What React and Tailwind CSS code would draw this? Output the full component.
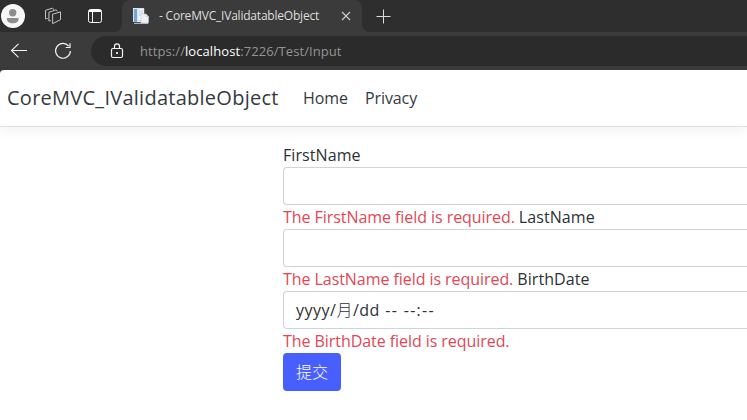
import React from "react";

function Profile() {
  return (
    <svg className="h-6 w-6 shrink-0" viewBox="0 0 24 24">
      <circle cx="12" cy="12" r="12" fill="#f7f7f7" />
      <circle cx="11.7" cy="12.8" r="0" />
      <circle cx="11.7" cy="8.8" r="3.7" fill="#8d8d8d" />
      <path d="M6 13.9h11.5v1.3c0 2.6-2.4 4.1-5.7 4.1S6 17.800 6 15.200z" fill="#8d8d8d" />
    </svg>
  );
}

function Workspaces() {
  return (
    <svg className="ml-[19px] h-[18px] w-[18px] shrink-0" viewBox="0 0 18 18" fill="none" stroke="#c4c4c4" strokeWidth="1" strokeLinejoin="round" strokeLinecap="round">
      <path d="M9 7.100 16.500 4.900V12.600L9 16.500Z" />
      <path d="M6.500 13.700 4.900 14V5.300L12 2.800 13.300 4" />
      <path d="M3.300 11.600 1.500 11.800V3.300L8.500 1.200 9.800 2.400" />
    </svg>
  );
}

function TabActions() {
  return (
    <svg className="ml-[25px] h-4 w-4 shrink-0" viewBox="0 0 16 16" fill="none" stroke="#fafafa" strokeWidth="1">
      <rect x="1.500" y="1.500" width="13" height="13" rx="2" />
      <path d="M2 2.500h12M2 3.500h12M5.500 4v10.500" />
    </svg>
  );
}

function PageIcon() {
  return (
    <svg className="ml-[11px] h-4 w-4 shrink-0" viewBox="0 0 16 16">
      <path d="M0 0h11v14H0z" fill="#e4edf4" />
      <path d="M1 1h3v13H1z" fill="#6fa8d8" />
      <path d="M0 1h1v13H0z" fill="#d7e6f2" />
      <path d="M5 .5h6v12H5z" fill="#f6f8fa" stroke="#c5ced8" strokeWidth=".5" />
      <path d="M6 3h4M6 5h4M6 7h4" stroke="#adc7dd" strokeWidth=".8" />
      <path d="M8 6h5l2.500 2.500V15H8z" fill="#edf1f5" stroke="#c0cbd7" strokeWidth=".6" />
      <path d="M13 6v2.500h2.500M1 15.300h14" fill="none" stroke="#c6d2de" strokeWidth="1" />
    </svg>
  );
}

function TabStrip() {
  return (
    <div className="flex h-8 bg-[#3b3b3b]">
      <div className="flex w-[122px] items-center rounded-br-lg bg-[#2e2e2e] pl-px">
        <Profile />
        <Workspaces />
        <TabActions />
      </div>
      <div className="w-[240px] bg-[#2e2e2e]">
        <div className="flex h-8 items-center rounded-t-lg bg-[#3b3b3b]">
          <PageIcon />
          <span className="ml-[10px] w-[160px] whitespace-nowrap text-[12px] tracking-[-0.210px] text-[#dedede]">- CoreMVC_IValidatableObject</span>
          <svg className="ml-[22px] h-2.5 w-2.5" viewBox="0 0 10 10" stroke="#d0d0d0" strokeWidth="1.100"><path d="M1 1l8 8M9 1L1 9" /></svg>
        </div>
      </div>
      <div className="flex flex-1 items-center rounded-bl-lg bg-[#2e2e2e] pl-[14px]">
        <svg className="h-[15px] w-[15px]" viewBox="0 0 15 15" stroke="#dcdcdc"><path d="M7.500 .5v14M.5 7.500h14" /></svg>
      </div>
    </div>
  );
}

function AddressBar() {
  return (
    <div className="flex h-[38px] items-center bg-[#3b3b3b] pl-[10px]">
      <svg className="h-4 w-[18px] shrink-0" viewBox="0 0 18 16" fill="none" stroke="#f2f2f2" strokeWidth="1.100"><path d="M17 7.500H1.500M8.500 .8 1.500 7.500l7 6.800" /></svg>
      <svg className="ml-[26px] h-[18px] w-[18px] shrink-0" viewBox="0 0 18 18" fill="none" stroke="#f2f2f2" strokeWidth="1.200"><path d="M14.800 4.200A7.400 7.400 0 1 0 16.400 9M16 1.200v4.300h-4.300" /></svg>
      <div className="ml-[19px] flex h-[30px] flex-1 items-center rounded-l-full bg-[#2b2b2b] pl-[19px]">
        <svg className="h-4 w-[14px] shrink-0" viewBox="0 0 14 16" fill="none" stroke="#f5f5f5" strokeWidth="1.200">
          <rect x="1.500" y="5.500" width="11" height="9" rx="1.500" />
          <path d="M4.500 5.500V3.300a2.500 2.500 0 0 1 5 0v2.200" />
          <circle cx="7" cy="10" r=".5" fill="#fff" />
        </svg>
        <span className="ml-4 pt-px whitespace-nowrap text-[13px] tracking-[0.080px] text-[#949494]">https://<span className="text-white">localhost</span>:7226/Test/Input</span>
      </div>
    </div>
  );
}

function Navbar() {
  return (
    <header className="bg-[linear-gradient(#3b3b3b_50%,white_50%)]">
      <nav className="flex h-[57px] items-center rounded-tl border-b border-[#dee0e6] bg-white pl-[7px] text-[#343a40] shadow-[0_4px_12px_rgba(0,0,0,0.050)]">
        <span className="w-[296px] whitespace-nowrap text-[20px] tracking-[0.260px]">CoreMVC_IValidatableObject</span>
        <a className="w-[62px] text-[16px] tracking-[-0.050px]">Home</a>
        <a className="text-[16px] tracking-[-0.100px]">Privacy</a>
      </nav>
    </header>
  );
}

function Field({ children }) {
  return <div className="flex h-[38px] items-center rounded-l border border-r-0 border-[#ced4da] bg-white pl-3 whitespace-nowrap">{children}</div>;
}

function Message({ error, label }) {
  return (
    <div className="flex h-6 items-center gap-[4px] whitespace-nowrap leading-6">
      {error && <span className="text-[#df4756]">{error}</span>}
      {label && <label className="tracking-[0.080px]">{label}</label>}
    </div>
  );
}

export default function App() {
  return (
    <div className="h-[420px] w-[747px] overflow-hidden bg-white font-['Open_Sans','Noto_Sans_CJK_TC',sans-serif]">
      <TabStrip />
      <AddressBar />
      <Navbar />
      <main className="pt-4 pl-[283px] text-[16px] tracking-[-0.060px] text-[#2c3136]">
        <Message label="FirstName" />
        <Field />
        <Message error="The FirstName field is required." label="LastName" />
        <Field />
        <Message error="The LastName field is required." label="BirthDate" />
        <Field><span className="tracking-[1.300px]"><span className="tracking-[0.500px]">yyyy/<span className="font-light">月</span>/dd</span> -- --:--</span></Field>
        <Message error="The BirthDate field is required." />
        <button className="block h-[38px] w-[58px] rounded bg-[#485fff] text-[16px] font-light tracking-normal text-white">提交</button>
      </main>
    </div>
  );
}
